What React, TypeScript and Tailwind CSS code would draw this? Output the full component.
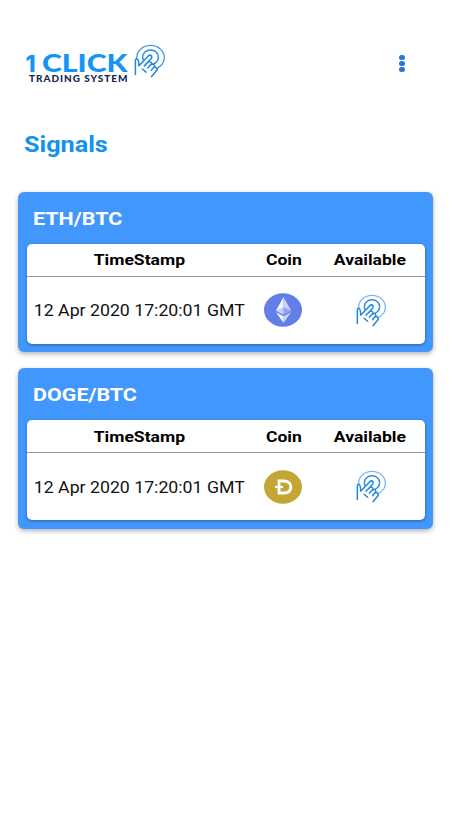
// src/App.tsx
import React from 'react';

const TapIcon: React.FC<{ className?: string; ring?: string }> = ({ className, ring = '#7db5ee' }) => {
  return (
    <svg viewBox="30 24 96 98" preserveAspectRatio="none" fill="none" strokeLinecap="round" strokeLinejoin="round" className={className}>
      <ellipse cx="81" cy="63" rx="40" ry="35" stroke={ring} strokeWidth="3.8" />
      <ellipse cx="81" cy="62" rx="23" ry="21" stroke="#2b8fdf" strokeWidth="4.4" />
      <path
        d="M37 112V73Q37 66 42 67Q46 68 47 82L51 83L75 59Q80 55 84 59Q86 62 83 66L68 81L75 76Q83 74 83 81L81 85Q91 80 92 88L90 93Q99 91 100 99L84 118L66 110L50 98Z"
        fill="#fff"
      />
      <path
        d="M37 112V73Q37 65 42 67Q47 70 47 87M49 85L75 58Q80 54 84 59Q86 62 83 66L63 87M70 80L76 75Q84 74 84 81L73 93M84 83Q92 80 93 88L83 100M93 91Q101 92 100 99L84 118M57 96L68 105"
        stroke="#1e88dc"
        strokeWidth="4.4"
      />
    </svg>
  );
};

const Logo: React.FC = () => {
  return (
    <div className="flex">
      <svg width="108" height="44" viewBox="0 0 108 44" className="font-['Lato']">
        <text x="0.5" y="30.5" fontSize="23" fontWeight="800" fill="#1793f5" className="font-['Inter']">
          1
        </text>
        <text x="17" y="30.5" fontSize="24" fontWeight="900" fill="#1793f5" textLength="85.5" lengthAdjust="spacingAndGlyphs">
          CLICK
        </text>
        <text x="4" y="41" fontSize="9" fontWeight="900" fill="#14284f" letterSpacing="0.9" textLength="99.5" lengthAdjust="spacingAndGlyphs">
          TRADING SYSTEM
        </text>
      </svg>
      <TapIcon className="mt-[2.5px] h-[34px] w-[33px]" ring="#3c9ce8" />
    </div>
  );
};

const EthIcon: React.FC = () => {
  return (
    <svg viewBox="0 0 38 34" className="h-[34px] w-[38px]">
      <ellipse cx="19" cy="17" rx="19" ry="16.7" fill="#627ee8" />
      <path d="M19.5 4L12 17.5L19.5 21.5Z" fill="#f3f5fe" />
      <path d="M19.5 4L27 17.5L19.5 21.5Z" fill="#cdd5f8" />
      <path d="M12 17.5L19.5 14.3V21.5Z" fill="#c5cff7" />
      <path d="M27 17.5L19.5 14.3V21.5Z" fill="#8fa2ee" />
      <path d="M12 19.2L19.5 23.3V30Z" fill="#f3f5fe" />
      <path d="M27 19.2L19.5 23.3V30Z" fill="#cdd5f8" />
    </svg>
  );
};

const DogeIcon: React.FC = () => {
  return (
    <svg viewBox="0 0 38 34" className="h-[34px] w-[38px]" fill="none" stroke="#fff">
      <ellipse cx="19" cy="17" rx="19" ry="16.7" fill="#c3a634" stroke="none" />
      <path d="M15 11H19.5Q26.8 11 26.8 17Q26.8 23 19.5 23H15Z" strokeWidth="2.8" />
      <path d="M11 17H19" strokeWidth="2.2" />
    </svg>
  );
};

interface SignalCardProps {
  pair: string;
  time: string;
  coin: React.ReactNode;
}

const SignalCard: React.FC<SignalCardProps> = ({ pair, time, coin }) => {
  return (
    <div className="h-[160.5px] rounded-[6px] bg-[#4197fb] px-[8.5px] shadow-[0_2px_5px_rgba(0,0,0,0.3)]">
      <h2 className="flex h-[52px] items-center pt-[3px] pl-[6.5px] text-[19px] font-bold text-white">
        <span className="origin-left scale-x-[1.13]">{pair}</span>
      </h2>
      <div className="h-[100px] rounded-[5px] bg-white shadow-[0_1px_3px_rgba(0,0,0,0.35)]">
        <div className="grid h-[33px] grid-cols-[225px_64px_108px] items-center justify-items-center border-b border-[#999] pt-[3px] text-[15.5px] font-bold text-black">
          <span className="scale-x-[1.13]">TimeStamp</span>
          <span className="scale-x-[1.13]">Coin</span>
          <span className="scale-x-[1.13]">Available</span>
        </div>
        <div className="grid h-[67px] grid-cols-[225px_63px_109px] items-center justify-items-center text-[16px] text-[#111]">
          <span className="scale-x-[1.107] pt-[2px] whitespace-nowrap">{time}</span>
          {coin}
          <TapIcon className="ml-[3px] h-[33px] w-[32px]" />
        </div>
      </div>
    </div>
  );
};

const App: React.FC = () => {
  return (
    <div className="h-[818px] w-[460px] overflow-hidden bg-white font-['Roboto',sans-serif]">
      <header className="flex justify-between pt-[41px] pr-[55.5px] pl-[25px]">
        <Logo />
        <div className="mt-[14px] flex flex-col gap-[1px]">
          <i className="h-[5px] w-[6px] rounded-full bg-[#2479d0]" />
          <i className="h-[5px] w-[6px] rounded-full bg-[#2479d0]" />
          <i className="h-[5px] w-[6px] rounded-full bg-[#2479d0]" />
        </div>
      </header>
      <h1 className="mt-[43px] flex h-[32px] items-center pl-[24px] text-[22px] font-bold text-[#1292ec]">
        <span className="origin-left scale-x-[1.145]">Signals</span>
      </h1>
      <main className="mt-[31.5px] ml-[18px] flex w-[415px] flex-col gap-[16px]">
        <SignalCard pair="ETH/BTC" time="12 Apr 2020 17:20:01 GMT" coin={<EthIcon />} />
        <SignalCard pair="DOGE/BTC" time="12 Apr 2020 17:20:01 GMT" coin={<DogeIcon />} />
      </main>
    </div>
  );
};

export default App;
